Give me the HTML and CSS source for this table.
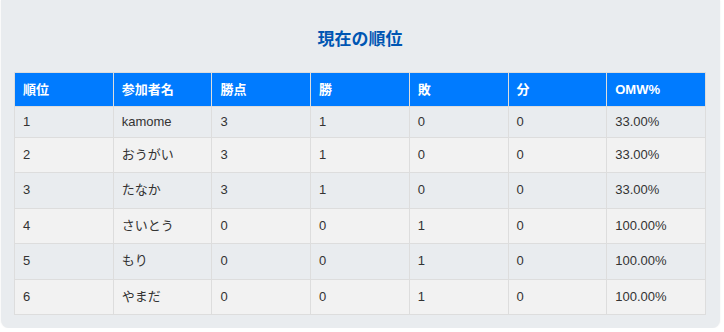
FILE: index.html
```html
<!DOCTYPE html>
<html lang="ja">
<head>
<meta charset="utf-8">
<title>現在の順位</title>
<link rel="stylesheet" href="styles.css">
</head>
<body>
<section class="card">
  <h2 class="title">現在の順位</h2>
  <table class="standings">
    <thead>
      <tr><th>順位</th><th>参加者名</th><th>勝点</th><th>勝</th><th>敗</th><th>分</th><th>OMW%</th></tr>
    </thead>
    <tbody>
      <tr><td>1</td><td>kamome</td><td>3</td><td>1</td><td>0</td><td>0</td><td>33.00%</td></tr>
      <tr><td>2</td><td>おうがい</td><td>3</td><td>1</td><td>0</td><td>0</td><td>33.00%</td></tr>
      <tr><td>3</td><td>たなか</td><td>3</td><td>1</td><td>0</td><td>0</td><td>33.00%</td></tr>
      <tr><td>4</td><td>さいとう</td><td>0</td><td>0</td><td>1</td><td>0</td><td>100.00%</td></tr>
      <tr><td>5</td><td>もり</td><td>0</td><td>0</td><td>1</td><td>0</td><td>100.00%</td></tr>
      <tr><td>6</td><td>やまだ</td><td>0</td><td>0</td><td>1</td><td>0</td><td>100.00%</td></tr>
    </tbody>
  </table>
</section>
</body>
</html>
```
FILE: styles.css
```css
html, body {
  margin: 0;
  padding: 0;
  background: #ffffff;
}
body {
  font-family: "Liberation Sans", Arial, "Noto Sans CJK JP", sans-serif;
  color: #333333;
}
.card {
  box-sizing: border-box;
  width: 719px;
  margin-left: 1px;
  padding: 28px 14px 13px 13px;
  background: #e9ecef;
  border-radius: 0 0 8px 8px;
  box-shadow: 0 0 2px rgba(0, 0, 0, 0.08);
}
.title {
  margin: 0 0 20px;
  text-align: center;
  font-size: 17px;
  line-height: 24px;
  font-weight: bold;
  color: #0056b3;
}
.standings {
  width: 100%;
  border-collapse: collapse;
  table-layout: fixed;
  font-size: 13px;
}
.standings th,
.standings td {
  border: 1px solid #dddddd;
  padding: 8px;
  text-align: left;
}
.standings th {
  background: #007bff;
  color: #ffffff;
  font-weight: bold;
  line-height: 17px;
}
.standings td {
  line-height: 18.4px;
}
.standings tbody tr:first-child td {
  line-height: 14px;
}
.standings tbody tr:nth-child(even) {
  background: #f2f2f2;
}
```
